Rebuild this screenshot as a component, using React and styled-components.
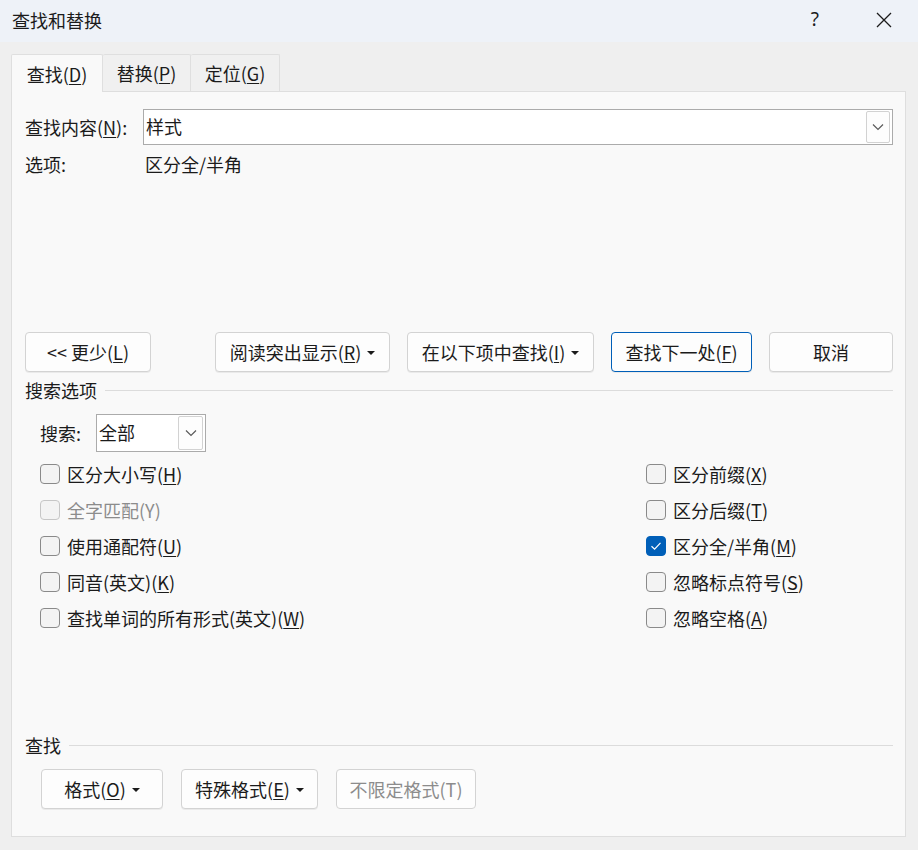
import React from 'react';
import styled, { createGlobalStyle } from 'styled-components';

const GlobalStyle = createGlobalStyle`
  html, body {
    margin: 0;
    padding: 0;
    background: #efefef;
  }
  body {
    font-family: 'Noto Sans CJK SC', 'Noto Sans', sans-serif;
    color: #1b1b1b;
    font-size: 18px;
  }
  u { text-underline-offset: 2px; }
`;

const leftOptions = [
  { label: '区分大小写', key: 'H' },
  { label: '全字匹配', key: 'Y', disabled: true },
  { label: '使用通配符', key: 'U' },
  { label: '同音(英文)', key: 'K' },
  { label: '查找单词的所有形式(英文)', key: 'W' },
];

const rightOptions = [
  { label: '区分前缀', key: 'X' },
  { label: '区分后缀', key: 'T' },
  { label: '区分全/半角', key: 'M', checked: true },
  { label: '忽略标点符号', key: 'S' },
  { label: '忽略空格', key: 'A' },
];

const Chevron = () => (
  <svg width="12" height="8" viewBox="0 0 12 8">
    <path d="M1 1.5 L6 6.5 L11 1.5" fill="none" stroke="#5a5a5a" strokeWidth="1.2" />
  </svg>
);

const Check = () => (
  <svg width="12" height="10" viewBox="0 0 12 10">
    <path d="M1.5 5.2 L4.6 8.2 L10.5 1.8" fill="none" stroke="#fff" strokeWidth="1.2" />
  </svg>
);

// label text with its access key underlined, kept in one span so flex gaps don't split it
const Keyed = ({ label, k }) => (
  <span>
    {label}(<u>{k}</u>)
  </span>
);

const Option = ({ label, k, checked, disabled }) => (
  <OptionRow $disabled={disabled}>
    <Box $checked={checked} $disabled={disabled}>{checked && <Check />}</Box>
    {disabled ? <span>{`${label}(${k})`}</span> : <Keyed label={label} k={k} />}
  </OptionRow>
);

export default function App() {
  return (
    <>
      <GlobalStyle />
      <Window>
        <TitleBar>
          <Title>查找和替换</Title>
          <TitleActions>
            <HelpMark>?</HelpMark>
            <svg width="18" height="18" viewBox="0 0 18 18">
              <path d="M2 2 L16 16 M16 2 L2 16" stroke="#1b1b1b" strokeWidth="1.3" />
            </svg>
          </TitleActions>
        </TitleBar>

        <Body>
          <Tabs>
            <Tab $active $w={92}><Keyed label="查找" k="D" /></Tab>
            <Tab $w={88}><Keyed label="替换" k="P" /></Tab>
            <Tab $w={89}><Keyed label="定位" k="G" /></Tab>
          </Tabs>

          <Panel>
            <FieldRow>
              <FieldLabel>查找内容(<u>N</u>):</FieldLabel>
              <Combo $w={750} $h={36}>
                <ComboText>样式</ComboText>
                <DropButton $w={24}><Chevron /></DropButton>
              </Combo>
            </FieldRow>

            <InfoRow>
              <FieldLabel>选项:</FieldLabel>
              <span>区分全/半角</span>
            </InfoRow>

            <ButtonRow>
              <Button $w={126}><span>&lt;&lt; 更少(<u>L</u>)</span></Button>
              <ButtonGroup>
                <Button $w={175}><Keyed label="阅读突出显示" k="R" /><Caret /></Button>
                <Button $w={187}><Keyed label="在以下项中查找" k="I" /><Caret /></Button>
                <Button $w={141} $primary><Keyed label="查找下一处" k="F" /></Button>
                <Button $w={124}>取消</Button>
              </ButtonGroup>
            </ButtonRow>

            <SectionHeader>
              <span>搜索选项</span>
              <Rule />
            </SectionHeader>

            <SearchRow>
              <span>搜索:</span>
              <Combo $w={110} $h={38}>
                <ComboText>全部</ComboText>
                <DropButton $w={25}><Chevron /></DropButton>
              </Combo>
            </SearchRow>

            <OptionGrid>
              <OptionColumn>
                {leftOptions.map(o => (
                  <Option key={o.key} label={o.label} k={o.key} disabled={o.disabled} />
                ))}
              </OptionColumn>
              <OptionColumn>
                {rightOptions.map(o => (
                  <Option key={o.key} label={o.label} k={o.key} checked={o.checked} />
                ))}
              </OptionColumn>
            </OptionGrid>

            <SectionHeader $bottom>
              <span>查找</span>
              <Rule />
            </SectionHeader>

            <FormatRow>
              <Button $w={122}><Keyed label="格式" k="O" /><Caret /></Button>
              <Button $w={137}><Keyed label="特殊格式" k="E" /><Caret /></Button>
              <Button $w={140} $disabled>不限定格式(T)</Button>
            </FormatRow>
          </Panel>
        </Body>
      </Window>
    </>
  );
}

const Window = styled.div`
  width: 918px;
  height: 850px;
  display: flex;
  flex-direction: column;
  background: #efefef;
  overflow: hidden;
`;

const TitleBar = styled.div`
  height: 42px;
  flex-shrink: 0;
  display: flex;
  align-items: center;
  justify-content: space-between;
  padding: 0 25px 0 12px;
  background: #eef2f8;
  box-sizing: border-box;
`;

const Title = styled.div`
  font-size: 18px;
  line-height: 1;
  padding-bottom: 3px;
`;

const TitleActions = styled.div`
  display: flex;
  align-items: center;
  gap: 56px;
  padding-bottom: 3px;
`;

const HelpMark = styled.span`
  font-family: 'Noto Sans', sans-serif;
  font-size: 19px;
  line-height: 1;
`;

const Body = styled.div`
  flex: 1;
  display: flex;
  flex-direction: column;
  padding: 12px 12px 13px 11px;
  min-height: 0;
`;

const Tabs = styled.div`
  display: flex;
  height: 37px;
  flex-shrink: 0;
`;

const Tab = styled.div`
  width: ${p => p.$w}px;
  box-sizing: border-box;
  display: flex;
  align-items: center;
  justify-content: center;
  font-size: 18px;
  background: ${p => (p.$active ? '#f9f9f9' : '#f0f0f0')};
  border: 1px solid #dfdfdf;
  border-bottom: none;
  border-left: ${p => (p.$active ? '1px solid #dfdfdf' : 'none')};
  margin-bottom: ${p => (p.$active ? '-1px' : '0')};
  position: relative;
  z-index: ${p => (p.$active ? 1 : 0)};
  border-radius: 2px 2px 0 0;
`;

const Panel = styled.div`
  flex: 1;
  display: flex;
  flex-direction: column;
  background: #f9f9f9;
  border: 1px solid #dedede;
  padding: 17px 12px 0 13px;
`;

const FieldRow = styled.div`
  display: flex;
  align-items: center;
  justify-content: space-between;
`;

const FieldLabel = styled.span`
  width: 118px;
  display: inline-block;
`;

const Combo = styled.div`
  width: ${p => p.$w}px;
  height: ${p => p.$h}px;
  box-sizing: border-box;
  display: flex;
  align-items: center;
  justify-content: space-between;
  background: #ffffff;
  border: 1px solid #ababab;
  padding: 1px 2px 1px 2px;
`;

const ComboText = styled.span`
  line-height: 1;
  padding-bottom: 2px;
`;

const DropButton = styled.div`
  width: ${p => p.$w}px;
  height: 100%;
  box-sizing: border-box;
  display: flex;
  align-items: center;
  justify-content: center;
  border: 1px solid #d2d2d2;
  border-radius: 2px;
  background: #fdfdfd;
`;

const InfoRow = styled.div`
  display: flex;
  align-items: center;
  margin-top: 6px;
  line-height: 26px;
  span:last-child { margin-left: 2px; }
`;

const ButtonRow = styled.div`
  display: flex;
  justify-content: space-between;
  margin-top: 155px;
`;

const ButtonGroup = styled.div`
  display: flex;
  gap: 17px;
`;

const Button = styled.div`
  width: ${p => p.$w}px;
  height: 40px;
  box-sizing: border-box;
  display: flex;
  align-items: center;
  justify-content: center;
  gap: 6px;
  font-size: 18px;
  background: #fdfdfd;
  color: ${p => (p.$disabled ? '#8c8c8c' : '#1b1b1b')};
  border: 1px solid ${p => (p.$primary ? '#005fb8' : '#d3d3d3')};
  border-radius: 4px;
  box-shadow: ${p => (p.$disabled ? 'none' : '0 1px 0 rgba(0,0,0,0.06)')};
`;

const Caret = styled.span`
  width: 0;
  height: 0;
  border-left: 4px solid transparent;
  border-right: 4px solid transparent;
  border-top: 4px solid #1b1b1b;
  margin-top: 1px;
`;

const SectionHeader = styled.div`
  display: flex;
  align-items: center;
  gap: 8px;
  margin-top: ${p => (p.$bottom ? '0' : '5px')};
  line-height: 26px;
`;

const Rule = styled.div`
  flex: 1;
  height: 1px;
  background: #dcdcdc;
  margin-top: 1px;
`;

const SearchRow = styled.div`
  display: flex;
  align-items: center;
  gap: 15px;
  margin-top: 11px;
  padding-left: 15px;
`;

const OptionGrid = styled.div`
  display: grid;
  grid-template-columns: 606px 1fr;
  padding-left: 15px;
  margin-top: 4px;
  height: 276px;
`;

const OptionColumn = styled.div`
  display: flex;
  flex-direction: column;
`;

const OptionRow = styled.div`
  display: flex;
  align-items: center;
  gap: 7px;
  height: 36px;
  color: ${p => (p.$disabled ? '#8c8c8c' : '#1b1b1b')};
`;

const Box = styled.span`
  width: 20px;
  height: 20px;
  box-sizing: border-box;
  border-radius: 4px;
  display: flex;
  align-items: center;
  justify-content: center;
  background: ${p => (p.$checked ? '#005fb8' : '#f3f3f3')};
  border: 1px solid ${p => (p.$checked ? '#005fb8' : p.$disabled ? '#c6c6c6' : '#8a8a8a')};
`;

const FormatRow = styled.div`
  display: flex;
  gap: 18px;
  padding-left: 16px;
  margin-top: 11px;
`;
